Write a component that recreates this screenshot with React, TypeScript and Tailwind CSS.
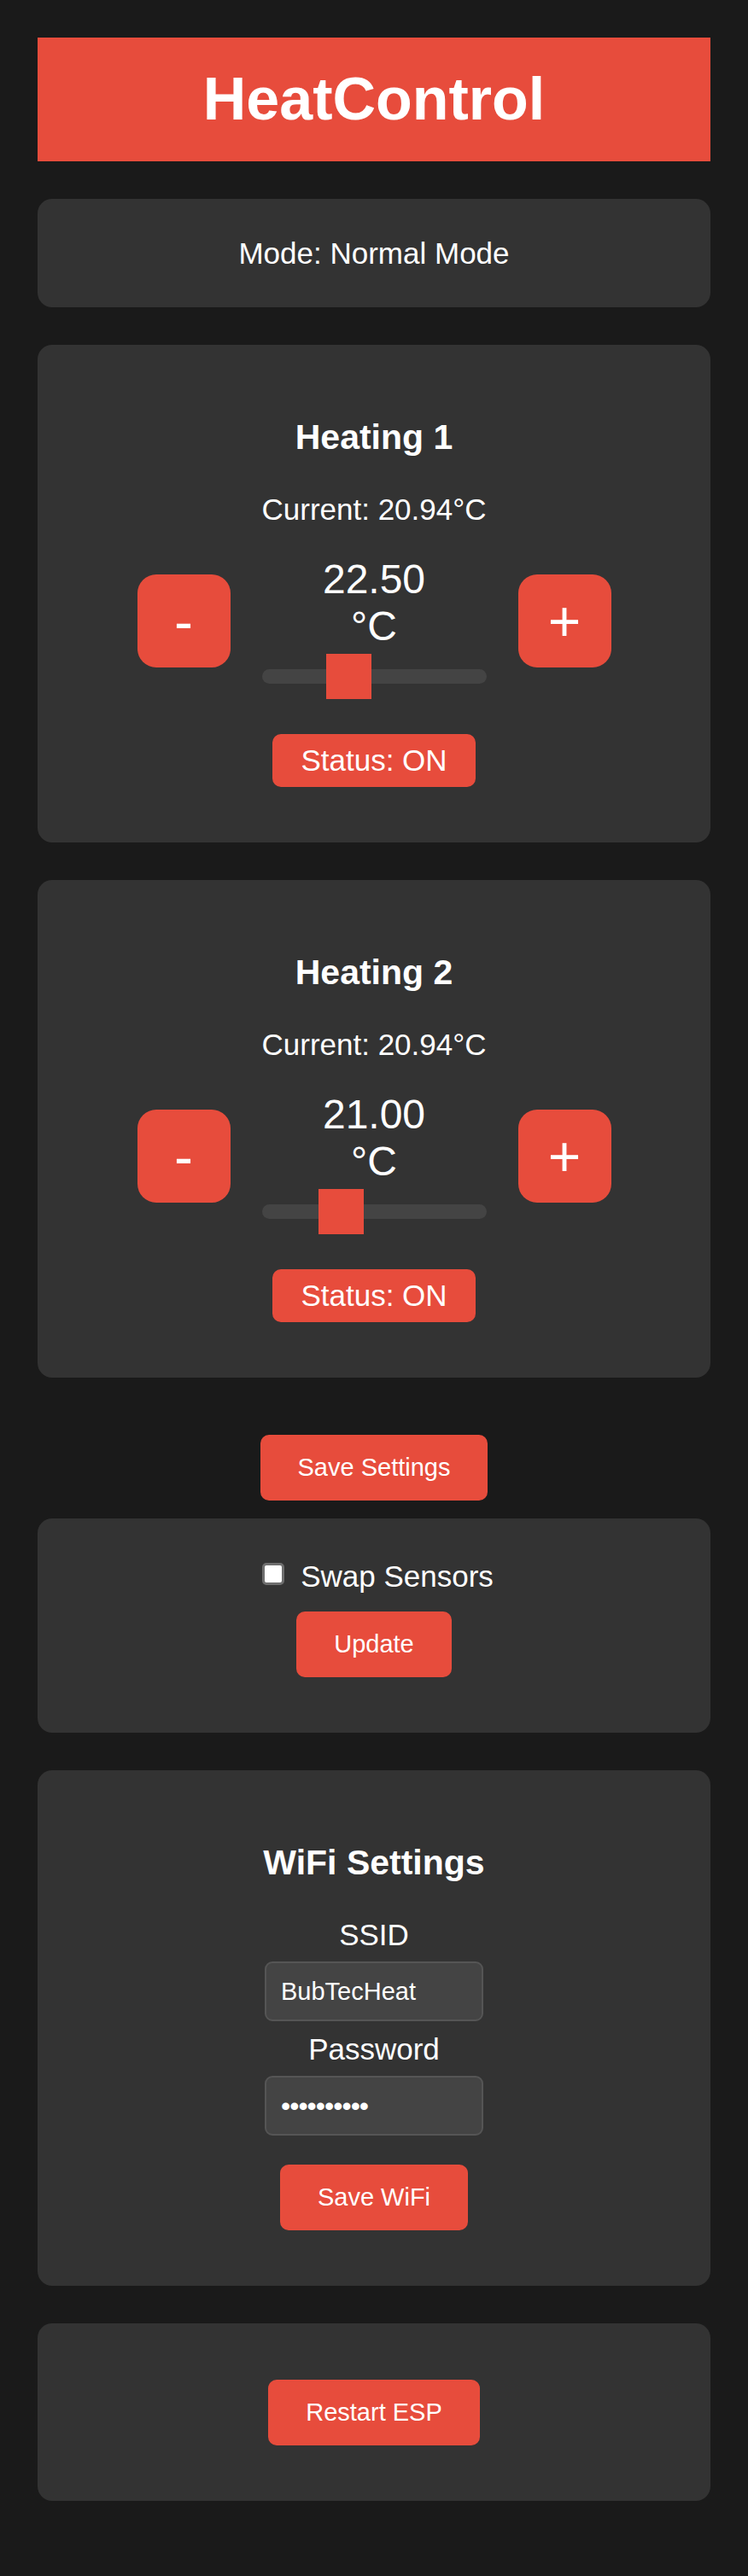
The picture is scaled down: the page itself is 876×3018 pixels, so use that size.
import { useState } from "react";

const MIN_TEMP = 10;
const MAX_TEMP = 45;
const TRACK_W = 263;
const THUMB_W = 53;

interface HeaterProps {
  title: string;
  current: number;
  initial: number;
}

// Flat red slider like the ESP page's styled range input
function TempSlider({ value }: { value: number }) {
  const frac = (value - MIN_TEMP) / (MAX_TEMP - MIN_TEMP);
  const left = frac * (TRACK_W - THUMB_W);

  return (
    <div className="relative w-[263px] h-[53px] mt-[5px]">
      <div className="absolute left-0 right-0 top-[18px] h-[17px] rounded-full bg-[#444444]" />
      <div
        className="absolute top-0 w-[53px] h-[53px] bg-[#e74c3c]"
        style={{ left }}
      />
    </div>
  );
}

function HeaterCard({ title, current, initial }: HeaterProps) {
  const [target, setTarget] = useState(initial);
  const [on, setOn] = useState(true);

  const step = (d: number) =>
    setTarget((t) => Math.min(MAX_TEMP, Math.max(MIN_TEMP, t + d)));

  return (
    <div className="mb-[44px] flex flex-col items-center rounded-[17px] bg-[#333333] p-[44px]">
      <h3 className="mt-[41px] text-[41px] leading-[47px] font-bold">{title}</h3>
      <p className="mt-[41px] text-[35px] leading-[40px]">
        Current: {current.toFixed(2)}°C
      </p>

      <div className="mt-[34px] flex items-start gap-[37px]">
        <button
          onClick={() => step(-0.5)}
          className="mt-[22px] flex h-[109px] w-[109px] items-center justify-center rounded-[22px] bg-[#e74c3c] text-[66px] leading-[76px] text-white"
        >
          -
        </button>

        <div className="flex w-[263px] flex-col items-center">
          <div className="text-center text-[48px] leading-[55px]">
            <div>{target.toFixed(2)}</div>
            <div>°C</div>
          </div>
          <TempSlider value={target} />
        </div>

        <button
          onClick={() => step(0.5)}
          className="mt-[22px] flex h-[109px] w-[109px] items-center justify-center rounded-[22px] bg-[#e74c3c] text-[66px] leading-[76px] text-white"
        >
          +
        </button>
      </div>

      <button
        onClick={() => setOn(!on)}
        className="mt-[41px] mb-[21px] rounded-[10px] bg-[#e74c3c] px-[33px] py-[11px] text-[35px] leading-[40px] text-white"
      >
        Status: {on ? "ON" : "OFF"}
      </button>
    </div>
  );
}

function RedButton({ children, className = "" }: { children: React.ReactNode; className?: string }) {
  return (
    <button
      className={`rounded-[10px] bg-[#e74c3c] px-[44px] py-[22px] text-[29px] leading-[33px] text-white ${className}`}
    >
      {children}
    </button>
  );
}

export default function App() {
  const [swap, setSwap] = useState(false);

  return (
    <div className="min-h-screen bg-[#1a1a1a] p-[44px] font-['Liberation_Sans',Arial,sans-serif] text-white">
      {/* Title bar */}
      <div className="mb-[44px] bg-[#e74c3c] py-[32px] text-center">
        <h1 className="text-[70px] leading-[81px] font-bold">HeatControl</h1>
      </div>

      {/* Mode */}
      <div className="mb-[44px] rounded-[17px] bg-[#333333] p-[44px] text-center">
        <p className="text-[35px] leading-[39px]">Mode: Normal Mode</p>
      </div>

      <HeaterCard title="Heating 1" current={20.94} initial={22.5} />
      <HeaterCard title="Heating 2" current={20.94} initial={21.0} />

      <div className="flex justify-center">
        <RedButton className="mt-[23px] mb-[21px]">Save Settings</RedButton>
      </div>

      {/* Sensor swap */}
      <div className="mb-[44px] flex flex-col items-center rounded-[17px] bg-[#333333] p-[44px]">
        <label className="mt-[4px] flex items-start gap-[19px] pl-[9px]">
          <input
            type="checkbox"
            checked={swap}
            onChange={(e) => setSwap(e.target.checked)}
            className="mt-[4px] h-[26px] w-[26px] appearance-none rounded-[5px] border-[3px] border-[#6e6e6e] bg-white checked:bg-[#e74c3c]"
          />
          <span className="text-[35px] leading-[40px]">Swap Sensors</span>
        </label>
        <RedButton className="mt-[21px] mb-[21px]">Update</RedButton>
      </div>

      {/* WiFi */}
      <div className="mb-[44px] flex flex-col items-center rounded-[17px] bg-[#333333] p-[44px]">
        <h3 className="mt-[41px] text-[41px] leading-[47px] font-bold">WiFi Settings</h3>
        <label className="mt-[41px] text-[35px] leading-[40px]">SSID</label>
        <input
          type="text"
          defaultValue="BubTecHeat"
          className="mt-[11px] h-[70px] w-[256px] rounded-[9px] border-2 border-[#555555] bg-[#444444] px-[17px] text-[29px] text-white outline-none"
        />
        <label className="mt-[13px] text-[35px] leading-[40px]">Password</label>
        <input
          type="password"
          defaultValue="heatpass12"
          className="mt-[11px] h-[70px] w-[256px] rounded-[9px] border-2 border-[#555555] bg-[#444444] px-[17px] text-[32px] tracking-[-1px] text-white outline-none"
        />
        <RedButton className="mt-[34px] mb-[21px]">Save WiFi</RedButton>
      </div>

      {/* Restart */}
      <div className="mb-[44px] flex flex-col items-center rounded-[17px] bg-[#333333] p-[44px]">
        <RedButton className="mt-[22px] mb-[21px]">Restart ESP</RedButton>
      </div>
    </div>
  );
}
